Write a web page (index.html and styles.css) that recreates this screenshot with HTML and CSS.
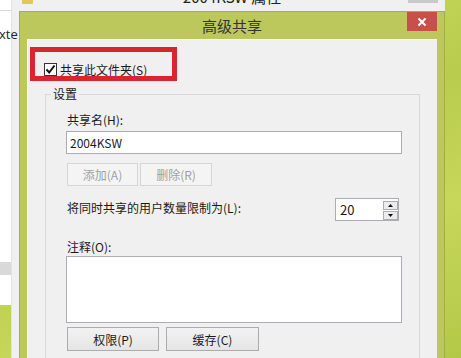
FILE: index.html
```html
<!DOCTYPE html>
<html lang="zh-CN">
<head>
  <meta charset="UTF-8">
  <title>高级共享</title>
  <link rel="stylesheet" href="styles.css">
</head>
<body>
  <div class="desktop">
    <div class="explorer">
      <div class="explorer-list">
        <div class="explorer-head"></div>
        <div class="explorer-item">xte</div>
        <div class="explorer-sel"></div>
      </div>
      <div class="explorer-edge"></div>
    </div>

    <div class="props">
      <div class="props-title">
        <span class="folder-icon"></span>
        <span class="props-caption">2004KSW 属性</span>
        <span class="props-close"></span>
      </div>
    </div>

    <div class="dialog">
      <div class="titlebar">
        <span></span>
        <span class="title">高级共享</span>
        <button class="close" type="button">
          <svg width="10" height="10" viewBox="0 0 10 10"><path d="M1.5 1.5 L8.5 8.5 M8.5 1.5 L1.5 8.5" stroke="#fff" stroke-width="2"/></svg>
        </button>
      </div>

      <div class="client">
        <label class="share-check">
          <span class="checkbox">
            <svg width="11" height="11" viewBox="0 0 11 11"><path d="M1.5 5.5 L4.2 8.5 L9.5 1.5" fill="none" stroke="#111" stroke-width="2"/></svg>
          </span>
          共享此文件夹(S)
        </label>

        <fieldset class="settings">
          <legend>设置</legend>
          <div class="field-label">共享名(H):</div>
          <div class="textbox">2004KSW</div>
          <div class="btn-row small">
            <button type="button" class="btn wide71" disabled>添加(A)</button>
            <button type="button" class="btn wide72" disabled>删除(R)</button>
          </div>
          <div class="limit-row">
            <span>将同时共享的用户数量限制为(L):</span>
            <div class="spinner">
              <span class="spin-value">20</span>
              <span class="spin-btns">
                <span class="spin"><svg width="5" height="3" viewBox="0 0 5 3"><polygon points="2.5,0 5,3 0,3" fill="#111"/></svg></span>
                <span class="spin"><svg width="5" height="3" viewBox="0 0 5 3"><polygon points="0,0 5,0 2.5,3" fill="#111"/></svg></span>
              </span>
            </div>
          </div>
          <div class="field-label comment">注释(O):</div>
          <div class="textarea"></div>
          <div class="btn-row">
            <button type="button" class="btn wide92">权限(P)</button>
            <button type="button" class="btn wide93">缓存(C)</button>
          </div>
        </fieldset>

        <div class="highlight"></div>
      </div>
    </div>
  </div>
</body>
</html>
```

FILE: styles.css
```css
body {
  margin: 0;
  font-family: "Noto Sans CJK SC", "Noto Sans", sans-serif;
  font-size: 12px;
  color: #1a1a1a;
}
.desktop {
  position: relative;
  width: 461px; height: 358px;
  overflow: hidden;
  background: linear-gradient(160deg, #cfe063 0%, #b9cc4d 45%, #c6d75a 70%, #b4c848 100%);
}

/* window behind, far left */
.explorer {
  position: absolute; left: 0; top: 0;
  width: 19px; height: 358px;
  display: grid; grid-template-columns: 11px 8px;
  align-items: start;
}
.explorer-list { height: 305px; background: #fff; position: relative; z-index: 1; }
.explorer-head { height: 10px; border-bottom: 1px solid #d9d9d9; }
.explorer-item {
  margin: 15px 0 0 -1px;
  line-height: 16px; font-size: 13px;
  white-space: nowrap; color: #222;
  font-family: "Open Sans", "Noto Sans", sans-serif;
}
.explorer-sel { margin-top: 220px; height: 13px; background: #d9d9d9; }
.explorer-edge { height: 358px; background: #f0f0f0; border-left: 1px solid #e2e2e2; box-sizing: border-box; }

/* properties window behind the dialog */
.props {
  position: absolute; left: 19px; top: 0;
  width: 426px; height: 358px;
  background: #f0f0f0;
}
.props-title {
  height: 11px; overflow: hidden;
  display: grid; grid-template-columns: 60px 1fr 60px;
  align-items: start;
}
.folder-icon { width: 11px; height: 4px; margin-left: 3px; background: #e8c35a; border-radius: 0 0 1px 1px; }
.props-caption {
  text-align: center; font-size: 15px; line-height: 20px;
  margin-top: -13px; color: #222;
}
.props-close { justify-self: end; width: 30px; height: 3px; margin-right: 7px; background: #c9c9c9; }

/* the dialog */
.dialog {
  position: absolute; left: 19px; top: 11px;
  width: 426px; height: 360px;
  box-sizing: border-box;
  background: #bcc85b;
  border: 1px solid #a2af46; border-bottom: none;
  padding: 0 7px;
  display: flex; flex-direction: column;
}
.titlebar {
  height: 29px;
  display: grid; grid-template-columns: 30px 1fr 30px;
  align-items: start;
}
.title { text-align: center; font-size: 15px; line-height: 27px; color: #333; }
.close {
  width: 30px; height: 19px;
  border: none; padding: 0;
  background: #c7504c;
  display: flex; align-items: center; justify-content: center;
}
.client {
  position: relative;
  flex: 1;
  background: #f0f0f0;
  box-shadow: inset 1px 1px 0 #fbfbfb;
}

.share-check {
  display: flex; align-items: center; gap: 3px;
  height: 17px;
  margin: 22px 0 0 17px;
}
.checkbox {
  width: 13px; height: 13px; box-sizing: border-box;
  border: 1px solid #333; background: #fff;
  display: flex; align-items: center; justify-content: center;
}
.highlight {
  position: absolute; left: 3px; top: 8px;
  width: 147px; height: 34px; box-sizing: border-box;
  border: 5px solid #d8262f;
}

.settings {
  margin: 8px 17px 0 18px;
  padding: 9px 17px 20px 20px;
  border: 1px solid #d9d9d9;
  min-width: 0;
}
.settings legend {
  margin-left: -15px;
  padding: 0 2px;
  line-height: 16px;
}
.field-label { line-height: 17px; padding-left: 1px; }
.textbox {
  margin-top: 3px;
  height: 23px; box-sizing: border-box;
  border: 1px solid #abadb3; background: #fff;
  padding-left: 3px; line-height: 21px;
}
.btn-row { display: flex; gap: 7px; padding-left: 1px; margin-top: 4px; }
.btn-row.small { gap: 2px; margin-top: 9px; }
.btn {
  height: 24px; box-sizing: border-box;
  font: inherit; color: #1a1a1a;
  border: 1px solid #acacac;
  background: linear-gradient(#f2f2f2, #e5e5e5);
  padding: 0;
}
.btn:disabled { height: 23px; color: #a0a0a0; border-color: #d5d5d5; background: #f4f4f4; }
.wide71 { width: 71px; }
.wide72 { width: 72px; }
.wide92 { width: 92px; }
.wide93 { width: 93px; }

.limit-row {
  display: flex; align-items: flex-start;
  margin-top: 12px; padding-left: 1px;
}
.limit-row span:first-child { line-height: 17px; margin-top: 1px; }
.spinner {
  margin-left: auto; margin-right: 3px;
  width: 64px; height: 23px; box-sizing: border-box;
  border: 1px solid #abadb3; background: #fff;
  display: flex; padding: 1px 0 0 4px;
}
.spin-value { flex: 1; line-height: 20px; font-size: 13px; }
.spin-btns { display: flex; flex-direction: column; gap: 1px; }
.spin {
  width: 15px; height: 9px; box-sizing: border-box;
  border: 1px solid #adadad; background: #ececec;
  display: flex; align-items: center; justify-content: center;
}
.field-label.comment { margin-top: 17px; }
.textarea {
  margin-top: 1px;
  height: 67px; box-sizing: border-box;
  border: 1px solid #abadb3; background: #fff;
}
```
